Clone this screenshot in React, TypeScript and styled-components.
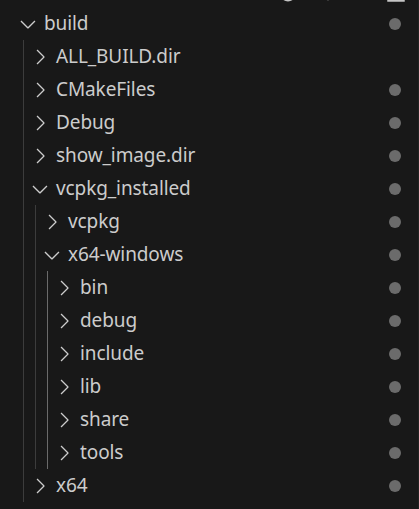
import React from "react";
import styled, { createGlobalStyle } from "styled-components";

const Global = createGlobalStyle`
  html, body { margin: 0; padding: 0; background: #181818; }
  body { width: 419px; height: 509px; overflow: hidden; font-family: "Noto Sans", "Open Sans", sans-serif; }
`;

type Node = { name: string; open?: boolean; dot?: boolean; children?: Node[] };

const tree: Node = {
  name: "build",
  open: true,
  dot: true,
  children: [
    { name: "ALL_BUILD.dir", dot: false },
    { name: "CMakeFiles", dot: true },
    { name: "Debug", dot: true },
    { name: "show_image.dir", dot: true },
    {
      name: "vcpkg_installed",
      open: true,
      dot: true,
      children: [
        { name: "vcpkg", dot: true },
        {
          name: "x64-windows",
          open: true,
          dot: true,
          children: [
            { name: "bin", dot: true },
            { name: "debug", dot: true },
            { name: "include", dot: true },
            { name: "lib", dot: true },
            { name: "share", dot: true },
            { name: "tools", dot: true },
          ],
        },
      ],
    },
    { name: "x64", dot: true },
  ],
};

const Panel = styled.div`
  width: 419px;
  height: 509px;
  background: #181818;
  overflow: hidden;
  position: relative;
  border-right: 1px solid #222;
  box-sizing: border-box;
`;

const Header = styled.div`
  height: 7px;
  overflow: hidden;
  display: flex;
  align-items: flex-end;
  position: relative;
`;

const HeaderIcon = styled.svg<{ $left: number }>`
  position: absolute;
  left: ${(p) => p.$left}px;
  bottom: 4px;
  width: 20px;
  height: 20px;
`;

const List = styled.div`
  display: flex;
  flex-direction: column;
`;

const Group = styled.div<{ $guide: number; $bright?: boolean }>`
  display: flex;
  flex-direction: column;
  position: relative;
  &::before {
    content: "";
    position: absolute;
    left: ${(p) => p.$guide}px;
    top: 0;
    bottom: 0;
    width: 1px;
    background: ${(p) => (p.$bright ? "#6a6a6a" : "#3c3c3c")};
  }
`;

const Row = styled.div<{ $depth: number }>`
  height: 33px;
  display: flex;
  align-items: center;
  padding-left: ${(p) => 16 + p.$depth * 12}px;
  padding-right: 17px;
  color: #cccccc;
  font-size: 19px;
  line-height: 33px;
`;

const Twistie = styled.span`
  width: 24px;
  height: 24px;
  flex: 0 0 24px;
  display: flex;
  align-items: center;
  justify-content: center;
  color: #cccccc;
`;

const Label = styled.span`
  flex: 1;
  margin-left: 4px;
  white-space: nowrap;
  letter-spacing: -0.1px;
`;

const Dot = styled.span<{ $show: boolean }>`
  width: 12px;
  height: 12px;
  border-radius: 50%;
  background: ${(p) => (p.$show ? "#6b6b6b" : "transparent")};
  flex: 0 0 12px;
`;

const Chevron = ({ open }: { open?: boolean }) => (
  <svg width="24" height="24" viewBox="0 0 16 16" fill="currentColor">
    {open ? (
      <path d="M7.976 10.072l4.357-4.357.62.618L8.284 11h-.618L3 6.333l.619-.618 4.357 4.357z" />
    ) : (
      <path d="M10.072 8.024L5.715 3.667l.618-.62L11 7.716v.618L6.333 13l-.618-.619 4.357-4.357z" />
    )}
  </svg>
);

const TreeNode = ({ node, depth }: { node: Node; depth: number }) => (
  <>
    <Row $depth={depth}>
      <Twistie>
        <Chevron open={node.open} />
      </Twistie>
      <Label>{node.name}</Label>
      <Dot $show={!!node.dot} />
    </Row>
    {node.open && node.children && (
      <Group $guide={23 + depth * 12} $bright={depth === 2}>
        {node.children.map((c) => (
          <TreeNode key={c.name} node={c} depth={depth + 1} />
        ))}
      </Group>
    )}
  </>
);

export default function App() {
  return (
    <>
      <Global />
      <Panel>
        <Header>
          <HeaderIcon $left={278} viewBox="0 0 16 16" fill="none" stroke="#c5c5c5" strokeWidth="1.4">
            <circle cx="8" cy="8" r="6" />
          </HeaderIcon>
          <HeaderIcon $left={318} viewBox="0 0 16 16" fill="none" stroke="#c5c5c5" strokeWidth="1.4">
            <circle cx="8" cy="8" r="5" />
          </HeaderIcon>
          <HeaderIcon $left={386} viewBox="0 0 16 16" fill="#c5c5c5">
            <rect x="1" y="13" width="14" height="2" />
          </HeaderIcon>
        </Header>
        <List>
          <TreeNode node={tree} depth={0} />
        </List>
      </Panel>
    </>
  );
}
